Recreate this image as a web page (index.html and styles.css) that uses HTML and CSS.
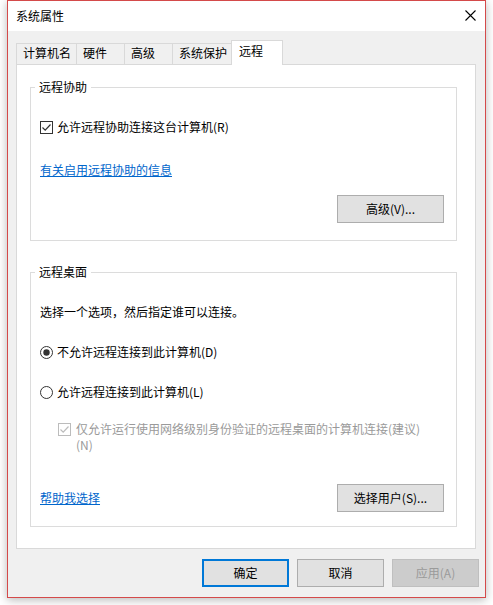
FILE: index.html
```html
<!DOCTYPE html>
<html lang="zh-CN">
<head>
<meta charset="utf-8">
<title>系统属性</title>
<link rel="stylesheet" href="styles.css">
</head>
<body>
<div class="window">
  <div class="titlebar">
    <span class="title">系统属性</span>
    <svg class="close" width="11" height="11" viewBox="0 0 11 11"><path d="M0.5 0.5 L10.5 10.5 M10.5 0.5 L0.5 10.5" stroke="#000" stroke-width="1.1" fill="none"/></svg>
  </div>
  <div class="client">
    <div class="tabs">
      <div class="tab t1">计算机名</div>
      <div class="tab t2">硬件</div>
      <div class="tab t3">高级</div>
      <div class="tab t4">系统保护</div>
      <div class="tab t5 active">远程</div>
    </div>
    <div class="panel">
      <fieldset class="group g1">
        <legend>远程协助</legend>
        <label class="check row1">
          <svg class="box" width="13" height="13" viewBox="0 0 13 13"><rect x="0.5" y="0.5" width="12" height="12" fill="#fff" stroke="#333"/><path d="M2.5 6.5 L5.2 9.2 L10.5 3.5" stroke="#333" stroke-width="1.2" fill="none"/></svg>
          <span>允许远程协助连接这台计算机(R)</span>
        </label>
        <a class="link l1">有关启用远程协助的信息</a>
        <div class="btnrow">
          <button class="btn">高级(V)...</button>
        </div>
      </fieldset>
      <fieldset class="group g2">
        <legend>远程桌面</legend>
        <p class="desc">选择一个选项，然后指定谁可以连接。</p>
        <label class="radio r1">
          <svg class="box" width="13" height="13" viewBox="0 0 13 13"><circle cx="6.5" cy="6.5" r="6" fill="#fff" stroke="#333"/><circle cx="6.5" cy="6.5" r="3.2" fill="#333"/></svg>
          <span>不允许远程连接到此计算机(D)</span>
        </label>
        <label class="radio r2">
          <svg class="box" width="13" height="13" viewBox="0 0 13 13"><circle cx="6.5" cy="6.5" r="6" fill="#fff" stroke="#333"/></svg>
          <span>允许远程连接到此计算机(L)</span>
        </label>
        <label class="check disabled">
          <svg class="box" width="13" height="13" viewBox="0 0 13 13"><rect x="0.5" y="0.5" width="12" height="12" fill="#fff" stroke="#bcbcbc"/><path d="M2.5 6.5 L5.2 9.2 L10.5 3.5" stroke="#bcbcbc" stroke-width="1.2" fill="none"/></svg>
          <span>仅允许运行使用网络级别身份验证的远程桌面的计算机连接(建议)<br>(N)</span>
        </label>
        <div class="btnrow split">
          <a class="link">帮助我选择</a>
          <button class="btn">选择用户(S)...</button>
        </div>
      </fieldset>
    </div>
    <div class="footer">
      <button class="btn default">确定</button>
      <button class="btn">取消</button>
      <button class="btn off">应用(A)</button>
    </div>
  </div>
</div>
</body>
</html>
```

FILE: styles.css
```css
* { box-sizing: border-box; }
html, body { margin: 0; padding: 0; background: #fff; }
body {
  font-family: "Noto Sans CJK SC", "Microsoft YaHei", sans-serif;
  font-size: 12px;
  line-height: 16px;
  color: #000;
  width: 493px;
  height: 605px;
  overflow: hidden;
}
.window {
  margin-left: 7px;
  width: 479px;
  height: 598px;
  border: 1px solid #d44a4a;
  background: #f0f0f0;
  box-shadow: 0 2px 9px rgba(0,0,0,0.28);
  display: flex;
  flex-direction: column;
}
.titlebar {
  height: 30px;
  background: #fff;
  display: flex;
  align-items: center;
  justify-content: space-between;
  padding: 0 9px 0 8px;
  flex-shrink: 0;
}
.close { display: block; margin-top: -1px; }
.client {
  flex: 1;
  display: flex;
  flex-direction: column;
  padding: 9px 9px 10px 8px;
}
.tabs {
  display: flex;
  align-items: flex-end;
  height: 25px;
  position: relative;
  z-index: 1;
  margin-bottom: -1px;
}
.tab {
  height: 21px;
  border: 1px solid #d9d9d9;
  border-bottom: none;
  background: #f0f0f0;
  padding: 1px 0 0 6px;
  margin-left: -1px;
  margin-bottom: 1px;
  white-space: nowrap;
}
.t1 { width: 61px; margin-left: 0; }
.t2 { width: 49px; }
.t3 { width: 49px; }
.t4 { width: 60px; }
.t5 { width: 52px; }
.tab.active {
  height: 25px;
  background: #fff;
  padding: 2px 0 0 7px;
  margin-bottom: 0;
}
.panel {
  width: 460px;
  height: 485px;
  border: 1px solid #d9d9d9;
  background: #fff;
  padding: 14px 0 0 13px;
  display: flex;
  flex-direction: column;
}
.group {
  margin: 0;
  width: 427px;
  border: 1px solid #dcdcdc;
  padding: 0 12px 0 9px;
  display: flex;
  flex-direction: column;
  align-items: flex-start;
  min-width: 0;
}
.group legend {
  margin-left: -5px;
  padding: 0 4px;
  line-height: 16px;
}
.g1 { padding-bottom: 17px; }
.g2 { margin-top: 23px; padding-bottom: 14px; }
.check, .radio {
  display: flex;
  align-items: flex-start;
  gap: 4px;
}
.check .box, .radio .box { flex-shrink: 0; margin-top: 2px; }
.row1 { margin-top: 24px; }
.link {
  color: #0066cc;
  text-decoration: underline;
  cursor: pointer;
}
.l1 { margin-top: 27px; }
.btnrow {
  align-self: stretch;
  display: flex;
  justify-content: flex-end;
  margin-top: 17px;
}
.btnrow.split {
  justify-content: space-between;
  align-items: center;
  margin-top: 31px;
}
.btn {
  font-family: inherit;
  font-size: 12px;
  line-height: 16px;
  width: 107px;
  height: 28px;
  margin: 0;
  padding: 0;
  background: #e1e1e1;
  border: 1px solid #adadad;
  color: #000;
}
.desc { margin: 24px 0 0; }
.r1 { margin-top: 24px; }
.r2 { margin-top: 24px; }
.disabled {
  margin-top: 21px;
  margin-left: 18px;
  color: #9a9a9a;
  gap: 5px;
}
.footer {
  display: flex;
  justify-content: flex-end;
  gap: 8px;
  margin-top: 10px;
  margin-right: -3px;
}
.footer .btn { width: 87px; }
.btn.default { border: 2px solid #0078d7; }
.btn.off {
  background: #cccccc;
  border-color: #bfbfbf;
  color: #9a9a9a;
}
```
